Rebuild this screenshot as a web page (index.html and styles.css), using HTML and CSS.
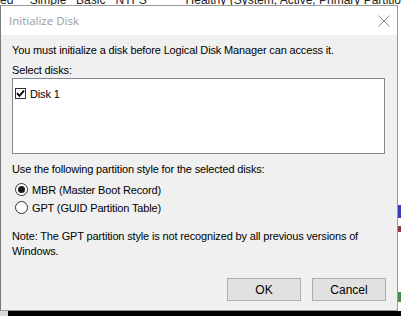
FILE: index.html
```html
<!DOCTYPE html>
<html>
<head>
<meta charset="utf-8">
<link rel="stylesheet" href="styles.css">
</head>
<body>
<div class="screen">
  <div class="behind-row">
    <span class="c1">ed</span><span class="c2">Simple</span><span class="c3">Basic</span><span class="c4">NTFS</span><span class="c5">Healthy (System, Active, Primary Partitio</span>
  </div>
  <div class="middle">
    <div class="dialog">
      <div class="titlebar">
        <span class="title">Initialize Disk</span>
        <svg class="close" width="12" height="12" viewBox="0 0 12 12"><path d="M0.5 0.5 L11.5 11.5 M11.5 0.5 L0.5 11.5" stroke="#8a8a8a" stroke-width="1" fill="none"/></svg>
      </div>
      <div class="body">
        <p class="line intro">You must initialize a disk before Logical Disk Manager can access it.</p>
        <p class="line label">Select disks:</p>
        <div class="listbox">
          <div class="item">
            <span class="check"><svg width="9" height="9" viewBox="0 0 9 9"><path d="M1 4.2 L3.4 6.8 L8 1.6" stroke="#000" stroke-width="1.8" fill="none"/></svg></span>
            <span>Disk 1</span>
          </div>
        </div>
        <p class="line label2">Use the following partition style for the selected disks:</p>
        <div class="radios">
          <div class="radio-row"><span class="radio on"></span><span>MBR (Master Boot Record)</span></div>
          <div class="radio-row"><span class="radio"></span><span>GPT (GUID Partition Table)</span></div>
        </div>
        <p class="line note">Note: The GPT partition style is not recognized by all previous versions of<br>Windows.</p>
        <div class="buttons">
          <button class="btn">OK</button>
          <button class="btn">Cancel</button>
        </div>
      </div>
    </div>
    <div class="strip">
      <div class="s-blue"></div>
      <div class="s-red"></div>
      <div class="s-green"></div>
    </div>
  </div>
  <div class="bottom">
    <div class="bottom-left"></div>
    <div class="bottom-black"></div>
  </div>
</div>
</body>
</html>
```

FILE: styles.css
```css
* { box-sizing: border-box; }
html, body { margin: 0; padding: 0; }
body {
  width: 401px;
  height: 316px;
  overflow: hidden;
  background: #ffffff;
  font-family: "Liberation Sans", Arial, sans-serif;
  font-size: 11px;
  letter-spacing: -0.15px;
  color: #000;
}
.screen { display: flex; flex-direction: column; width: 401px; height: 316px; }
.behind-row {
  height: 5px;
  overflow: hidden;
  display: flex;
  white-space: nowrap;
  line-height: 14px;
  font-size: 12px;
  letter-spacing: 0;
  color: #222;
}
.behind-row span { display: block; margin-top: -7px; }
.c1 { width: 30px; }
.c2 { width: 47px; }
.c3 { width: 40px; }
.c4 { width: 71px; }
.c5 { flex: 1; }
.middle { display: flex; height: 306px; }
.dialog {
  width: 398px;
  height: 306px;
  border: 1px solid #9a9a9a;
  border-left-color: #7a7a7a;
  background: #f0f0f0;
  display: flex;
  flex-direction: column;
}
.titlebar {
  height: 29px;
  background: #ffffff;
  display: flex;
  align-items: center;
  justify-content: space-between;
  padding: 0 6px 0 8px;
  flex-shrink: 0;
}
.title {
  font-family: "Open Sans", "Noto Sans", sans-serif;
  font-size: 11.5px;
  letter-spacing: 0;
  color: #9a9a9a;
}
.close { margin-right: 1px; }
.body { padding: 8px 11px 0 11px; flex: 1; display: flex; flex-direction: column; }
.line { margin: 0; line-height: 15px; white-space: nowrap; }
.label { margin-top: 5px; }
.listbox {
  width: 373px;
  height: 76px;
  flex-shrink: 0;
  background: #fff;
  border: 1px solid #828790;
  padding: 8px 2px 0 2px;
}
.item { display: flex; align-items: center; gap: 4px; height: 13px; }
.check {
  width: 11px; height: 11px;
  border: 1px solid #333;
  background: #fff;
  display: flex; align-items: center; justify-content: center;
}
.label2 { margin-top: 8px; }
.radios { margin-top: 6px; display: flex; flex-direction: column; gap: 5px; }
.radio-row { display: flex; align-items: center; gap: 4px; height: 13px; padding-left: 3px; }
.radio {
  width: 13px; height: 13px;
  border: 1px solid #333;
  border-radius: 50%;
  background: #fff;
  display: flex; align-items: center; justify-content: center;
}
.radio.on::after {
  content: "";
  width: 7px; height: 7px;
  border-radius: 50%;
  background: #1a1a1a;
}
.note { margin-top: 15px; }
.buttons { display: flex; justify-content: flex-end; gap: 11px; margin-top: 19px; }
.btn {
  width: 74px; height: 23px;
  background: #e1e1e1;
  border: 1px solid #adadad;
  font-family: "Liberation Sans", Arial, sans-serif;
  font-size: 12px;
  color: #000;
  padding: 0;
}
.strip { width: 3px; height: 306px; background: #fff; display: flex; flex-direction: column; }
.s-blue { margin-top: 200px; height: 13px; background: #3b3bbb; }
.s-red { margin-top: 8px; height: 6px; background: #8a3a3a; }
.s-green { margin-top: 60px; height: 10px; background: #4a8a4a; }
.bottom { display: flex; height: 5px; }
.bottom-left { width: 8px; background: #d8d8d8; }
.bottom-black { flex: 1; background: #000; }
```
